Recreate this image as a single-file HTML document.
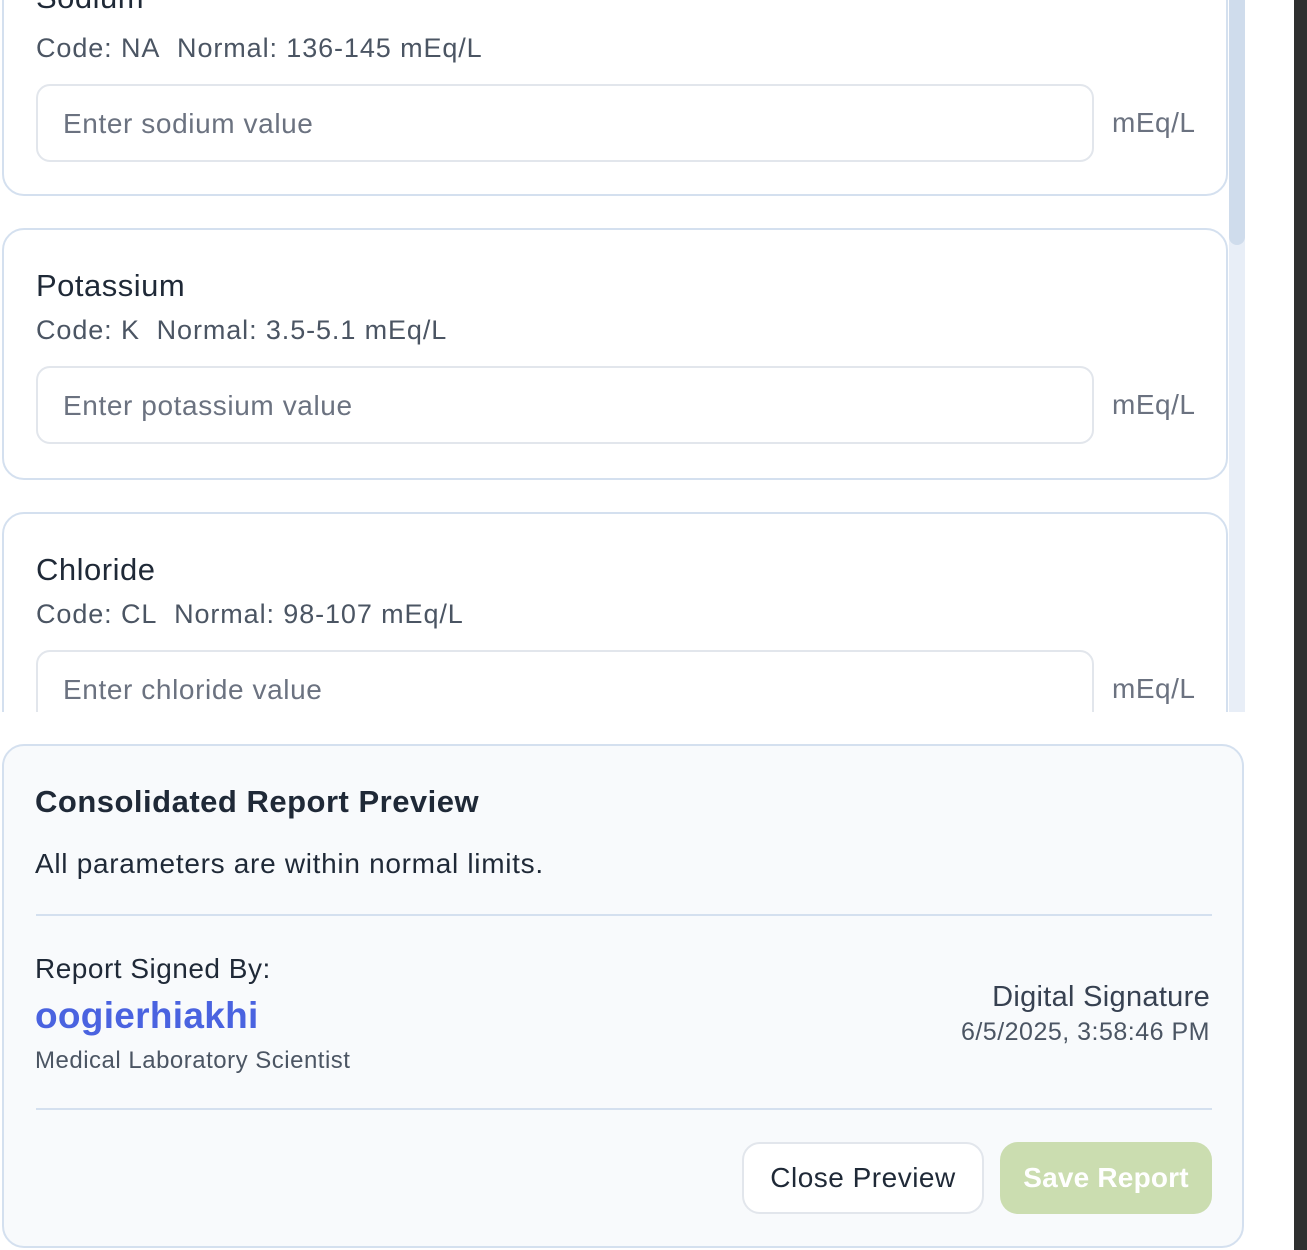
<!DOCTYPE html>
<html><head><style>
*{box-sizing:border-box;margin:0;padding:0}
body{width:1307px;height:1250px;background:#fff;font-family:"Liberation Sans",sans-serif;position:relative;overflow:hidden}
.dark{position:absolute;left:1294px;top:0;width:13px;height:1250px;background:#2f3030}
.scroll{position:absolute;left:0;top:0;width:1245px;height:712px;overflow:hidden}
.track{position:absolute;left:1229px;top:0;width:16px;height:712px;background:#e8eef7}
.thumb{position:absolute;left:1229px;top:0;width:16px;height:245px;background:#cfdcec;border-radius:0 0 8px 8px}
.card{position:absolute;left:2px;width:1226px;border:2px solid #d4e0ef;border-radius:22px;background:#fff}
.t{position:absolute;left:32px;font-size:31px;color:#1f2937;letter-spacing:0.5px}
.c{position:absolute;left:32px;font-size:27px;color:#4b5563;letter-spacing:0.9px}
.in{position:absolute;left:32px;width:1058px;height:78px;border:2px solid #e2e6ec;border-radius:14px;font-size:28px;color:#6b7280;padding:22px 0 0 25px;letter-spacing:0.6px}
.u{position:absolute;left:1108px;font-size:28px;color:#6b7280;letter-spacing:0.5px}
.prev{position:absolute;left:2px;top:744px;width:1242px;height:504px;background:#f8fafc;border:2px solid #d4e0ef;border-radius:22px}
.hr{position:absolute;left:32px;width:1176px;height:2px;background:#d4e0ef}
</style></head><body>
<div class="dark"></div>
<div class="scroll">
 <div class="card" style="top:-40px;height:236px">
  <div class="t" style="top:18px">Sodium</div>
  <div class="c" style="top:71px">Code: NA&nbsp;&nbsp;Normal: 136-145 mEq/L</div>
  <div class="in" style="top:122px">Enter sodium value</div>
  <div class="u" style="top:145px">mEq/L</div>
 </div>
 <div class="card" style="top:228px;height:252px">
  <div class="t" style="top:38px">Potassium</div>
  <div class="c" style="top:85px">Code: K&nbsp;&nbsp;Normal: 3.5-5.1 mEq/L</div>
  <div class="in" style="top:136px">Enter potassium value</div>
  <div class="u" style="top:159px">mEq/L</div>
 </div>
 <div class="card" style="top:512px;height:252px">
  <div class="t" style="top:38px">Chloride</div>
  <div class="c" style="top:85px">Code: CL&nbsp;&nbsp;Normal: 98-107 mEq/L</div>
  <div class="in" style="top:136px">Enter chloride value</div>
  <div class="u" style="top:159px">mEq/L</div>
 </div>
 <div class="track"></div><div class="thumb"></div>
</div>
<div class="prev">
 <div style="position:absolute;left:31px;top:38px;font-size:31px;font-weight:bold;color:#1f2937;letter-spacing:0.5px">Consolidated Report Preview</div>
 <div style="position:absolute;left:31px;top:102px;font-size:28px;color:#1f2937;letter-spacing:0.7px">All parameters are within normal limits.</div>
 <div class="hr" style="top:168px"></div>
 <div style="position:absolute;left:31px;top:207px;font-size:28px;color:#1f2937;letter-spacing:0.5px">Report Signed By:</div>
 <div style="position:absolute;left:31px;top:249px;font-size:37px;font-weight:bold;color:#4a63e0;letter-spacing:0.3px">oogierhiakhi</div>
 <div style="position:absolute;left:31px;top:301px;font-size:24px;color:#4b5563;letter-spacing:0.5px">Medical Laboratory Scientist</div>
 <div style="position:absolute;right:32px;top:235px;font-size:29px;color:#374151;text-align:right;letter-spacing:0.3px">Digital Signature</div>
 <div style="position:absolute;right:32px;top:272px;font-size:25px;color:#4b5563;text-align:right;letter-spacing:0.5px">6/5/2025, 3:58:46 PM</div>
 <div class="hr" style="top:362px"></div>
 <div style="position:absolute;left:738px;top:396px;width:242px;height:72px;border:2px solid #e2e6ec;border-radius:18px;background:#fff;font-size:28px;color:#1f2937;text-align:center;line-height:68px;letter-spacing:0.5px">Close Preview</div>
 <div style="position:absolute;left:996px;top:396px;width:212px;height:72px;border-radius:18px;background:#cbddb0;font-size:28px;color:#fff;text-align:center;line-height:72px;font-weight:bold;letter-spacing:0.2px">Save Report</div>
</div>
</body></html>
